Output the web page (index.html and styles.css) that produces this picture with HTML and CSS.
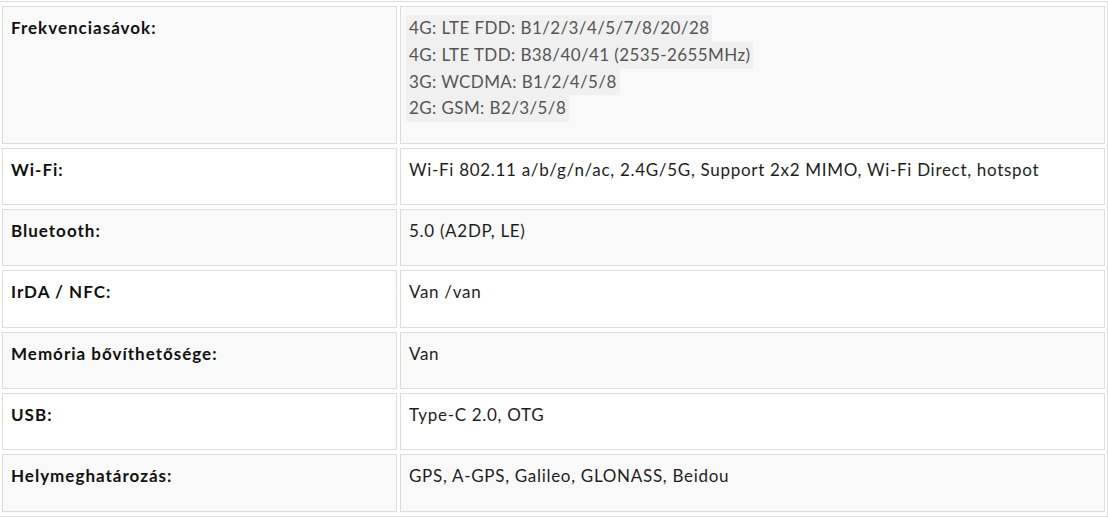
FILE: index.html
```html
<!DOCTYPE html>
<html lang="hu">
<head>
<meta charset="utf-8">
<title>Specifikáció</title>
<link rel="stylesheet" href="styles.css">
</head>
<body>
<div class="spec">
  <div class="row alt">
    <div class="cell label">Frekvenciasávok:</div>
    <div class="cell value muted">
      <span class="band">4G: LTE FDD: B1/2/3/4/5/7/8/20/28</span>
      <span class="band">4G: LTE TDD: B38/40/41 (2535-2655MHz)</span>
      <span class="band">3G: WCDMA: B1/2/4/5/8</span>
      <span class="band">2G: GSM: B2/3/5/8</span>
    </div>
  </div>
  <div class="row">
    <div class="cell label">Wi-Fi:</div>
    <div class="cell value">Wi-Fi 802.11 a/b/g/n/ac, 2.4G/5G, Support 2x2 MIMO, Wi-Fi Direct, hotspot</div>
  </div>
  <div class="row alt">
    <div class="cell label">Bluetooth:</div>
    <div class="cell value">5.0 (A2DP, LE)</div>
  </div>
  <div class="row">
    <div class="cell label">IrDA / NFC:</div>
    <div class="cell value">Van /van</div>
  </div>
  <div class="row alt">
    <div class="cell label">Memória bővíthetősége:</div>
    <div class="cell value">Van</div>
  </div>
  <div class="row">
    <div class="cell label">USB:</div>
    <div class="cell value">Type-C 2.0, OTG</div>
  </div>
  <div class="row alt">
    <div class="cell label">Helymeghatározás:</div>
    <div class="cell value">GPS, A-GPS, Galileo, GLONASS, Beidou</div>
  </div>
</div>
</body>
</html>
```

FILE: styles.css
```css
html, body {
  margin: 0;
  padding: 0;
  background: #ffffff;
}

body {
  font-family: Lato, "Open Sans", "Liberation Sans", sans-serif;
  font-size: 17px;
  color: #1a1a1a;
}

.spec {
  box-sizing: border-box;
  width: 1108px;
  margin-top: 1px;
  padding: 4px 2px 4px 2px;
  border: 1px solid #dcdcdc;
  border-left: 0;
  display: flex;
  flex-direction: column;
  gap: 4px;
}

.row {
  display: flex;
  gap: 3px;
}

.cell {
  box-sizing: border-box;
  border: 1px solid #dcdcdc;
  background: #ffffff;
  padding: 8px 8px 20.6px 8px;
  line-height: 26.75px;
}

.row.alt .cell {
  background: #f9f9f9;
}

.label {
  flex: 0 0 395px;
  font-weight: 700;
  color: #111111;
  letter-spacing: 1px;
}

.value {
  flex: 1 1 auto;
  color: #1e1e1e;
  letter-spacing: 0.7px;
}

.value.muted {
  color: #555555;
  letter-spacing: 0.4px;
  display: flex;
  flex-direction: column;
  align-items: flex-start;
}

.band {
  background: #f0f0f0;
  margin-left: -3px;
  padding: 0 3px;
}
```
